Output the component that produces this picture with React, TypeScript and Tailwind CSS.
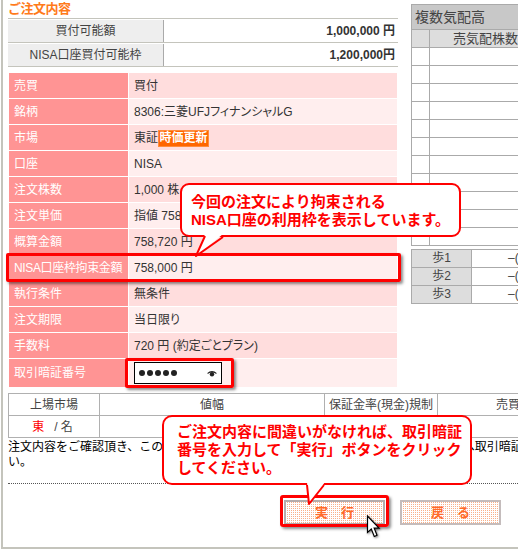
const rows: { label: string; value?: string }[] = [
  { label: "売買", value: "買付" },
  { label: "銘柄", value: "8306:三菱UFJフィナンシャルG" },
  { label: "市場" },
  { label: "口座", value: "NISA" },
  { label: "注文株数", value: "1,000 株" },
  { label: "注文単価", value: "指値 758 円" },
  { label: "概算金額", value: "758,720 円" },
  { label: "NISA口座枠拘束金額", value: "758,000 円" },
  { label: "執行条件", value: "無条件" },
  { label: "注文期限", value: "当日限り" },
  { label: "手数料", value: "720 円 (約定ごとプラン)" },
];

const dots = ["a", "b", "c", "d", "e"];
const bookRows = [1, 2, 3, 4, 5, 6, 7, 8, 9, 10, 11];

function Limit({ label, value }: { label: string; value: string }) {
  return (
    <div className="flex h-6 border-t border-[#c4c4bc] pt-px">
      <div className="flex h-[22px] w-[156px] items-center justify-center border-r border-[#aaa] bg-[#eee] text-[#444]">{label}</div>
      <div className="flex h-[22px] flex-1 items-center justify-end pr-[3px] font-bold text-[#333]">{value}</div>
    </div>
  );
}

function Tail({ className, points, line }: { className: string; points: string; line: string }) {
  return (
    <svg className={className} viewBox="0 0 30 24">
      <polygon points={points} fill="#fff" />
      <polyline points={line} fill="none" stroke="#f00" strokeWidth="2" strokeLinejoin="round" />
    </svg>
  );
}

export default function App() {
  return (
    <div
      className="relative h-[549px] w-[518px] overflow-hidden bg-white text-[12px] leading-[15px] text-[#333]"
      style={{ fontFamily: '"Liberation Sans", "Noto Sans CJK JP", sans-serif' }}
    >
      <div className="ml-px h-[549px] border-b-2 border-l-2 border-[#c4c4bc] pl-[5px]">
        <div className="flex">
          <div className="w-[390px] shrink-0">
            <h2 className="h-[18px] text-[13px] leading-[18px] font-bold tracking-[-0.5px] text-[#ff7a1a]">ご注文内容</h2>
            <Limit label="買付可能額" value="1,000,000 円" />
            <Limit label="NISA口座買付可能枠" value="1,200,000円" />
            <div className="border-t border-[#c4c4bc]" />

            <div className="mt-[6px] ml-px flex w-[388px] flex-col gap-px">
              {rows.map((row, i) => (
                <div key={row.label} className="flex h-[25px] gap-px">
                  <div className={`flex w-[119px] items-center bg-[#ff9494] pt-px pl-[5px] whitespace-nowrap text-white ${row.label.startsWith("NISA") ? "tracking-[-0.35px]" : ""}`}>{row.label}</div>
                  <div className={`flex flex-1 items-center pt-px pl-[5px] whitespace-pre [font-feature-settings:'palt'] ${i % 2 === 0 ? "bg-[#ffdddd]" : "bg-[#ffeeee]"}`}>
                    {row.value ?? (
                      <>
                        東証
                        <span className="flex h-[17px] w-[51px] items-center justify-center border border-[#ff8c3c] bg-[#ff6600] font-bold text-white">時価更新</span>
                      </>
                    )}
                  </div>
                </div>
              ))}
              <div className="flex h-[28px] gap-px">
                <div className="flex w-[119px] items-center bg-[#ff9494] pl-[5px] text-white">取引暗証番号</div>
                <div className="flex flex-1 items-start bg-[#ffeeee] pt-[3px] pl-[5px]">
                  <div className="flex h-[22px] w-[88px] items-center justify-between border border-black bg-white pr-[4px] pl-[4px]">
                    <div className="flex gap-[2px]">
                      {dots.map((d) => (
                        <span key={d} className="h-[6px] w-[6px] rounded-full bg-[#222]" />
                      ))}
                    </div>
                    <svg width="10" height="7" viewBox="0 0 10 7">
                      <path d="M0 3.2Q5 -1.2 10 3.2L8.8 3.8Q5 1.4 1.2 3.8Z" fill="#222" />
                      <circle cx="5" cy="4.2" r="2.2" fill="#222" />
                    </svg>
                  </div>
                </div>
              </div>
            </div>
          </div>

          <div className="mt-1 ml-[13px] w-[130px] shrink-0 text-[#444]">
            <div className="border-t border-l border-[#aaa]">
              <div className="flex h-[25px] items-center border-b border-[#aaa] bg-[#c8c8c8] pl-[3px] text-[14px]">複数気配高</div>
              <div className="flex h-[18px] border-b border-[#aaa] text-[13px]">
                <div className="w-[18px] border-r border-[#aaa] bg-[#ddd]" />
                <div className="flex flex-1 items-center justify-center bg-[#ddd] whitespace-nowrap">売気配株数</div>
              </div>
              {bookRows.map((n) => (
                <div key={n} className="flex h-[18px] border-b border-[#aaa]">
                  <div className="w-[18px] border-r border-[#aaa]" />
                </div>
              ))}
            </div>
            <div className="mt-[3px] border-t border-l border-[#aaa]">
              {["歩1", "歩2", "歩3"].map((s) => (
                <div key={s} className="flex h-[18px] border-b border-[#aaa]">
                  <div className="flex w-[60px] items-center justify-center border-r border-[#aaa] bg-[#ddd]">{s}</div>
                  <div className="flex items-center pl-[36px] whitespace-nowrap">–(–)</div>
                </div>
              ))}
            </div>
          </div>
        </div>

        <div className="mt-[6px] grid w-[570px] grid-cols-[91px_225px_113px_141px] border-t border-l border-[#b0b0b0] text-[#444]">
          <div className="flex h-[22px] items-center justify-center border-r border-b border-[#b0b0b0] pt-px">上場市場</div>
          <div className="flex h-[22px] items-center justify-center border-r border-b border-[#b0b0b0] pt-px">値幅</div>
          <div className="flex h-[22px] items-center justify-center border-r border-b border-[#b0b0b0] pt-px whitespace-nowrap">保証金率(現金)規制</div>
          <div className="flex h-[22px] items-center justify-center border-r border-b border-[#b0b0b0] pt-px">売買</div>
          <div className="flex h-[22px] items-center justify-center border-r border-b border-[#b0b0b0] pt-px pr-[3px]">
            <span className="text-[#f00]">東</span>
            <span className="ml-[10px]">/ 名</span>
          </div>
          <div className="h-[22px] border-r border-b border-[#b0b0b0]" />
          <div className="h-[22px] border-r border-b border-[#b0b0b0]" />
          <div className="h-[22px] border-r border-b border-[#b0b0b0]" />
        </div>

        <p className="mt-[2px] h-[29px] w-[600px] text-black">
          <span className="whitespace-nowrap">注文内容をご確認頂き、この注文内容で発注してよろしければ、確認のため、下記欄へ取引暗証番号を</span>
          <br />
          い。
        </p>
        <div className="mt-[14px] w-[520px] border-t border-dotted border-[#555]" />

        <div className="mt-[16px] ml-[276px] flex gap-[15px]">
          <button className="flex h-[25px] w-[101px] items-center justify-center border-2 border-[#b4acac] bg-[repeating-conic-gradient(#f9b08a_0_25%,#fff_0_100%)] bg-[length:2px_2px] text-[13px] font-bold text-[#ff6a2a]">実　行</button>
          <button className="flex h-[25px] w-[101px] items-center justify-center border-2 border-[#c4bcbc] bg-[repeating-conic-gradient(#f9b08a_0_25%,#fff_0_100%)] bg-[length:2px_2px] text-[13px] font-bold text-[#ff6a2a]">戻　る</button>
        </div>
      </div>

      {/* 赤枠 */}
      <div className="absolute top-[253px] left-[6px] h-[29px] w-[395px] rounded-[2px] border-[3px] border-[#f00] shadow-[2px_2px_3px_rgba(0,0,0,0.45)]" />
      <div className="absolute top-[358px] left-[125px] h-[30px] w-[109px] rounded-[2px] border-[3px] border-[#f00] shadow-[2px_2px_3px_rgba(0,0,0,0.45)]" />
      <div className="absolute top-[495px] left-[280px] h-[32px] w-[109px] rounded-[3px] border-[3px] border-[#f00] shadow-[2px_2px_3px_rgba(0,0,0,0.45)]" />

      {/* 吹き出し */}
      <div className="absolute top-[183px] left-[180px] flex h-[54px] w-[281px] flex-col justify-center rounded-[9px] border-2 border-[#f00] bg-white pt-[2px] pl-[9px] text-[15px] leading-[18px] font-bold text-[#f00]">
        <span>今回の注文により拘束される</span>
        <span className="whitespace-nowrap">NISA口座の利用枠を表示しています。</span>
      </div>
      <Tail className="absolute top-[234px] left-[194px] h-[24px] w-[30px]" points="11,0 2,22 29,0" line="11,2 2,22 29,3" />

      <div className="absolute top-[415px] left-[162px] flex h-[70px] w-[310px] flex-col justify-center rounded-[10px] border-2 border-[#f00] bg-white pl-[13px] text-[15px] leading-[18px] font-bold whitespace-nowrap text-[#f00]">
        <span>ご注文内容に間違いがなければ、取引暗証</span>
        <span>番号を入力して「実行」ボタンをクリック</span>
        <span>してください。</span>
      </div>
      <Tail className="absolute top-[482px] left-[305px] h-[24px] w-[30px]" points="2,0 4,22 20,0" line="2,3 4,22 19,3" />

      <svg className="absolute top-[515px] left-[366px] drop-shadow-[1px_1px_1px_rgba(0,0,0,0.5)]" width="15" height="24" viewBox="0 0 15 24">
        <path d="M1.5 1V17.5L5.3 14L8.3 21.5L11 20.3L8.2 13.2H13Z" fill="#fff" stroke="#000" strokeWidth="1.2" />
      </svg>
    </div>
  );
}
